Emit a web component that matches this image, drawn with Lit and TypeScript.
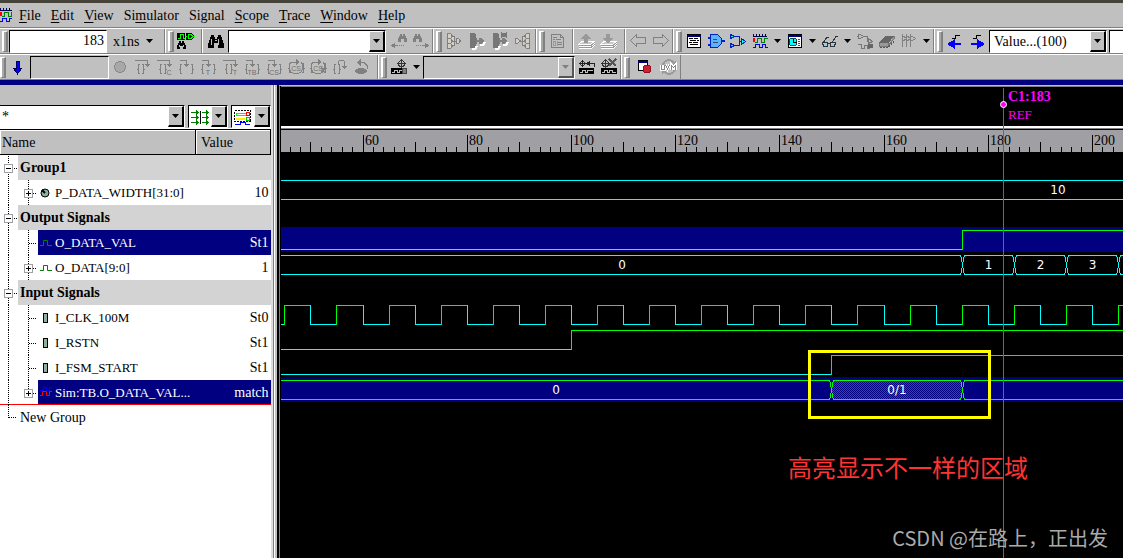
import { LitElement, html, svg, css, nothing } from "lit";
import { customElement } from "lit/decorators.js";
import { classMap } from "lit/directives/class-map.js";

/* ---------- icons (18 x 18 grid) ---------- */

const BINOC = "M4 3h3v2h1v2h2V5h1V3h3v2h1v3h1v3h1v5h-6v-5h-4v5H1v-5h1V8h1V5h1z";
const SMALL_BINOC = "M2 0h2v2h1v-2h2v2h1v2h1v4h-3v-3h-3v3h-3v-4h1v-2h1z";

const OPEN = "M3 0h-1.500v4.500h-1.500h1.500v4.500H3";
const CLOSE = "M0 0h1.500v4.500h1.500h-1.500v4.500H0";

const brace = (letters: string, wide = false) => svg`
  <path d=${OPEN} transform=${wide ? "translate(1.500 6.500)" : "translate(3.500 6.500)"} fill="none" stroke="#808080" />
  <path d=${CLOSE} transform=${wide ? "translate(13.500 6.500)" : "translate(8.500 6.500)"} fill="none" stroke="#808080" />
  ${wide
    ? svg`<path d="M3 2.500h6v4" fill="none" stroke="#808080" /><path d="M7 6h5l-2.500 3z" fill="#808080" />`
    : svg`<path d="M2 2.500h12v4" fill="none" stroke="#808080" /><path d="M12 6h5l-2.500 3z" fill="#808080" />`}
  ${letters
    ? svg`<text x=${wide ? 9 : 14} y="17" font-size="7" text-anchor="middle" font-family="Liberation Sans, sans-serif" fill="#707070">${letters}</text>`
    : nothing}`;

const ring = (extra: unknown) => svg`
  <path d="M4 4a7 7 0 1 0 10 0M4 4.500h7" fill="none" stroke="#808080" /><path d="M9 1v6l4-3z" fill="#808080" />
  <path d=${OPEN} transform="translate(.5 5.500)" fill="none" stroke="#808080" />
  <path d=${CLOSE} transform="translate(14.500 5.500)" fill="none" stroke="#808080" />
  <text x="9" y="13" font-size="7" text-anchor="middle" font-family="Liberation Sans, sans-serif" fill="#707070">CS</text>${extra}`;

const stack = (up: boolean) => svg`
  <path d="M1 12l4-3h12l-4 3zM1 14.500h12l4-3M1 16.500h12l4-3" fill="#c8c8c8" stroke="#fff" />
  <path d="M1 13.500h12l4-3M1 15.500h12l4-3" fill="none" stroke="#999" />
  <path d=${up ? "M8 2l6 5h-4v4H6V7H2z" : "M6 2h4v4h4l-6 5-6-5h4z"} fill="#999" />`;

const wave = svg`
  <path d="M2 4.500h14M2.500 2v2M5.500 2v2M8.500 2v2M11.500 2v2M14.500 2v2" stroke="#000050" fill="none" />
  <rect x="2" y="6" width="2" height="4" fill="#f00" />
  <path d="M4 10.500h2.500V6.500h4v4h3V6.500h3" stroke="#008000" fill="none" />
  <path d="M2 15.500h2.500v-3h4v3h3v-3h3v3h2" stroke="#00f" fill="none" />`;

const win = svg`<rect x="2.500" y="2.500" width="13" height="13" fill="#fff" stroke="#000" /><path d="M2 3.500h14" stroke="#000080" stroke-width="2" />`;

const ICONS: Record<string, unknown> = {
  open: svg`
    <path d="M0 1h8v7H0zM9 1h5l4 3v1l-4 3H9z" fill="#000" />
    <path d="M1 6.500h2v-4h3v4h2M8 4.500h2M11 2.500h3l2 2-2 2h-3zM16 4.500h2" stroke="#0f0" fill="none" />
    <path d=${SMALL_BINOC} transform="translate(0 9)" fill="#000" />
    <path d="M2.500 13v2M6.500 13v2" stroke="#c0c0c0" />`,
  binoc: svg`<path d=${BINOC} fill="#000" /><path d="M4.500 7v6M11.500 7v6M8 8.500h2" stroke="#c0c0c0" fill="none" />`,
  findPrev: svg`<path d=${SMALL_BINOC} transform="translate(8 2)" fill="#808080" />
    <path d="M2 13.500h6m1 0h1m1 0h1m1 0h1" stroke="#808080" /><path d="M1 13.500l4-3v6z" fill="#808080" />`,
  findNext: svg`<path d=${SMALL_BINOC} transform="translate(1 2)" fill="#808080" />
    <path d="M4 13.500h1m1 0h1m1 0h1m1 0h6" stroke="#808080" /><path d="M17 13.500l-4-3v6z" fill="#808080" />`,
  driver: svg`<path d="M2.500 1.500h3l2 2.500-2 2.500h-3zM2.500 6.500h3l2 2.500-2 2.500h-3zM2.500 11.500h3l2 2.500-2 2.500h-3zM7 4.500h2v9H7M7 9.500h4M11.500 6.500h2l2 2.500-2 2.500h-2z" fill="#d4d0c8" stroke="#808080" />`,
  load: svg`<path d="M2 1h4l2 2v3l1 1v4l-1 1v2l-2 2H2z" fill="#777" />
    <path d="M4 17h3l2-3M12 13h3l2-3" stroke="#fff" stroke-width="2" fill="none" />
    <path d="M8 8h3v-2h3l2 3-2 3h-3v-2H8z" fill="#808080" />`,
  connect: svg`<path d="M2 1h4l2 2v3l1 1v4l-1 1v2l-2 2H2z" fill="#777" />
    <path d="M10 1l6 4M16 1l-6 4" stroke="#777" stroke-width="2" />
    <path d="M4 17h3l2-3M12 13h3l2-3" stroke="#fff" stroke-width="2" fill="none" />
    <path d="M8 8h3v-2h3l2 3-2 3h-3v-2H8z" fill="#808080" />`,
  fan: svg`<path d="M15.500 1.500h-3l-2 2.500 2 2.500h3zM15.500 6.500h-3l-2 2.500 2 2.500h3zM15.500 11.500h-3l-2 2.500 2 2.500h3zM10 4.500H8v9h2M7 9.500h3M1.500 6.500h2l3 2.500-3 2.500h-2z" fill="#d4d0c8" stroke="#808080" />`,
  doc: svg`<path d="M3.500 2.500h9l3 3v10h-12zM12.500 2.500v3h3M5 5.500h4M5 7.500h2m1 0h5M10 10.500h4M10 12.500h4" fill="none" stroke="#808080" />
    <path d="M5.500 9.500h2v4h-2zM9.500 9v5" fill="none" stroke="#999" />`,
  up: stack(true),
  down: stack(false),
  back: svg`<path d="M1.500 8.500l6-6v3h9v6h-9v3z" fill="none" stroke="#808080" />`,
  fwd: svg`<path d="M16.500 8.500l-6-6v3h-9v6h9v3z" fill="none" stroke="#808080" />`,
  source: svg`${win}<path d="M4 6.500h4m1 0h4M5 8.500h6m1 0h2M4 10.500h3m1 0h5M5 12.500h8" stroke="#000" />`,
  gate: svg`<path d="M3.500 2.500h7l4 4v5l-4 4h-7z" fill="#5ab4ff" stroke="#0020c0" /><path d="M1 5.500h2M1 12.500h2M15 9h3" stroke="#0020c0" stroke-width="2" /><path d="M6 7.500h4M6 10.500h5" stroke="#404870" />`,
  tree: svg`<path d="M5 4.500h5v9H5M10 9.500h3" fill="none" stroke="#0020c0" /><path d="M1.500 2.500l4 2-4 2zM1.500 11.500l4 2-4 2zM12.500 6.500l4 3-4 3z" fill="#0ff" stroke="#0020c0" />`,
  wave,
  clockwin: svg`${win}<circle cx="7" cy="10" r="4" fill="#0ff" stroke="#005050" /><path d="M7.500 7v3h3" fill="none" stroke="#000" /><path d="M12 7.500h2M12 9.500h2M12 11.500h2M12 13.500h2" stroke="#080" />`,
  glasses: svg`<path d="M2 11l4-6h2M11 11l4-7 2 1M7 11.500h3" fill="none" stroke="#333" /><path d="M1.500 10.500h5v4h-4zM9.500 10.500h5l-1 4h-4z" fill="#90d0ff" stroke="#333" />`,
  schem: svg`<path d="M2.500 2.500h2l3 2-3 2h-2zM1 4.500h1M8 4.500h3v5h2M12.500 6.500l4 3-4 2zM2 12.500h3v4h3v-3h3v3h3" fill="none" stroke="#777" /><rect x="12" y="12" width="5" height="4" fill="#666" />`,
  chip: svg`<path d="M1 11l6-7h9l-5 7z" fill="#666" /><path d="M1 11v3h9v-3M10 14l6-7V4" fill="#999" stroke="#777" /><path d="M2 15.500h8l6-6" stroke="#555" stroke-dasharray="2 1" fill="none" />`,
  flags: svg`<path d="M2.500 2v13M6.500 2v13M10.500 2v13M2.500 3.500l4 3-4 3M6.500 3.500l4 3-4 3M10.500 3.500l5 3-5 3" fill="none" stroke="#808080" />`,
  edgePrev: svg`<path d="M6 6.500h3v-3h5" stroke="#000" fill="none" /><path d="M1 12l8-5v4h6v2H9v4z" fill="#00f" />`,
  edgeNext: svg`<path d="M5 6.500h3v-3h5" stroke="#000" fill="none" /><path d="M17 12L9 7v4H3v2h6v4z" fill="#00f" />`,
  downArrow: svg`<path d="M7 3h3v7h3l-4.500 6L4 10h3z" fill="#00f" stroke="#000060" />`,
  stop: svg`<circle cx="9" cy="9" r="5.500" fill="#a8a8a8" stroke="#888" />`,
  step: brace(""),
  stepC: brace("C"),
  stepDot: brace("", true),
  stepT: brace("T", true),
  stepTask: brace("T"),
  stepTB: brace("TB", true),
  stepCS: brace("CS", true),
  loopCS: ring(nothing),
  loopX: ring(svg`<path d="M12 9l4 6M16 9l-4 6" stroke="#808080" />`),
  stepOut: svg`<path d=${OPEN} transform="translate(1.500 6.500)" fill="none" stroke="#808080" /><path d=${CLOSE} transform="translate(6.500 6.500)" fill="none" stroke="#808080" />
    <path d="M7.500 6v-2l1-1.500h4l1 1.500v4" fill="none" stroke="#808080" /><path d="M11 8h5l-2.500 3z" fill="#808080" />`,
  undo: svg`<path d="M6 4.500h5l3 3v3" fill="none" stroke="#808080" /><path d="M8 1v7L4 4.500z" fill="#808080" /><ellipse cx="8" cy="13" rx="6" ry="3" fill="#808080" />`,
  probe: svg`<circle cx="11.500" cy="5.500" r="3" fill="none" stroke="#333" /><path d="M11.500 1v9M7 5.500h9" stroke="#333" /><rect x="1" y="10" width="11" height="6" fill="#000" /><path d="M2 14.500h2.500v-2h3v2h2v-2h2" stroke="#c0c0c0" fill="none" /><rect x="12.500" y="10.500" width="4" height="5" fill="#808080" stroke="#444" />`,
  mark: svg`<circle cx="4.500" cy="5.500" r="2" fill="none" stroke="#333" /><path d="M4.500 2v7M1 5.500h7M8 5.500h8.500v3" stroke="#222" fill="none" /><path d="M8 5.500l4-3v6z" fill="#222" /><rect x="1" y="10" width="15" height="6" fill="#000" /><path d="M2 14.500h2.500v-2h3v2h2v-2h5" stroke="#c0c0c0" fill="none" />`,
  unmark: svg`<circle cx="5.500" cy="5.500" r="3" fill="none" stroke="#333" /><path d="M5.500 1v9M1 5.500h9" stroke="#333" /><path d="M9 1l7 7M16 1L9 8" stroke="#555" stroke-width="2" /><rect x="1" y="10" width="16" height="6" fill="#000" /><path d="M2 14.500h2.500v-2h3v2h2v-2h3v2h3" stroke="#c0c0c0" fill="none" />`,
  record: svg`<rect x="3.500" y="2.500" width="9" height="10" fill="#fff" stroke="#000" /><path d="M3 3.500h10" stroke="#000080" stroke-width="2" /><circle cx="12" cy="11" r="4" fill="#d02030" stroke="#901020" />`,
  uvm: svg`<path d="M3 7a6 6 0 0 1 11-2M15 11a6 6 0 0 1-11 2" stroke="#999" stroke-width="2" fill="none" /><path d="M16 2v5h-5zM2 16v-5h5z" fill="#999" />
    <path d="M1.500 7v4h3V7M5.500 7l2 4 2-4M11.500 11.500V7.500l2 2 2-2v4" stroke="#fff" stroke-width="3" fill="none" /><path d="M1.500 7v4h3V7M5.500 7l2 4 2-4M11.500 11.500V7.500l2 2 2-2v4" stroke="#888" fill="none" />`,
};

const icon = (name: string) =>
  html`<svg width="18" height="18" viewBox="0 0 18 18" shape-rendering="crispEdges" aria-hidden="true">${ICONS[name]}</svg>`;
const triangle = html`<svg width="7" height="4" viewBox="0 0 7 4" aria-hidden="true"><path d="M0 0h7L3.500 4z" fill="currentColor" /></svg>`;

/* ---------- time axis ---------- */

const END = 600;
const at = (t: number) => Math.floor(82 + (t - 60) * 5.21);

type Segment = { from: number; to: number; label: string; labelX?: number; diff?: boolean };
type Signal = {
  name: string;
  value?: string;
  kind: "group" | "signal";
  icon?: "param" | "net" | "port" | "compare";
  expand?: boolean;
  selected?: boolean;
  edges?: number[];
  start?: 0 | 1;
  bus?: Segment[];
  tone?: string;
};

const counter: Segment[] = [{ from: -60, to: 175, label: "0", labelX: 341 }];
for (let i = 1; 165 + i * 10 < END; i++) counter.push({ from: 165 + i * 10, to: 175 + i * 10, label: String(i) });
const clock: number[] = [];
for (let t = 45; t < END; t += 5) clock.push(t);

const SIGNALS: Signal[] = [
  { name: "Group1", kind: "group" },
  { name: "P_DATA_WIDTH[31:0]", value: "10", kind: "signal", icon: "param", expand: true, bus: [{ from: -60, to: END, label: "10", labelX: 777 }] },
  { name: "Output Signals", kind: "group" },
  { name: "O_DATA_VAL", value: "St1", kind: "signal", icon: "net", selected: true, start: 0, edges: [175] },
  { name: "O_DATA[9:0]", value: "1", kind: "signal", icon: "net", expand: true, bus: counter },
  { name: "Input Signals", kind: "group" },
  { name: "I_CLK_100M", value: "St0", kind: "signal", icon: "port", start: 0, edges: clock },
  { name: "I_RSTN", value: "St1", kind: "signal", icon: "port", start: 0, edges: [100] },
  { name: "I_FSM_START", value: "St1", kind: "signal", icon: "port", start: 0, edges: [150] },
  {
    name: "Sim:TB.O_DATA_VAL...", value: "match", kind: "signal", icon: "compare", expand: true, selected: true, tone: "#0f0",
    bus: [
      { from: -60, to: 150, label: "0", labelX: 275 },
      { from: 150, to: 175, label: "0/1", diff: true },
      { from: 175, to: END, label: "" },
    ],
  },
];

const BASE = css`
  :host, * { box-sizing: border-box; }
  button, input, select { font: inherit; color: inherit; margin: 0; padding: 0; border: 0; border-radius: 0; background: none; outline: none; }
  svg { display: block; flex: none; }
`;

/* ---------- drop-down ---------- */

@customElement("combo-box")
class ComboBox extends LitElement {
  static properties = { label: {}, value: {}, off: { type: Boolean } };
  declare label: string;
  declare value: string;
  declare off: boolean;
  static styles = [BASE, css`
    :host { display: grid; height: 23px; border: 1px solid #fff; border-top-color: #000; border-left-color: #000; background: #fff; align-items: stretch; min-width: 0; overflow: hidden; }
    :host([off]) { background: #c0c0c0; color: #808080; }
    select { grid-area: 1 / 1; appearance: none; width: 100%; padding-left: 4px; color: #000; opacity: 1; }
    .arrow { grid-area: 1 / 1; justify-self: end; width: 16px; display: grid; place-items: center; background: #c0c0c0; border: 1px solid #fff; border-right: 2px solid #000; border-bottom: 2px solid #000; pointer-events: none; }
    :host([off]) .arrow { border-color: #fff #555 #555 #fff; }
    .icon { grid-area: 1 / 1; align-self: center; pointer-events: none; padding-left: 1px; }
  `];
  render() {
    return html`<select aria-label=${this.label} ?disabled=${this.off}><option>${this.value}</option></select>
      <span class="icon"><slot></slot></span>
      <span class="arrow">${triangle}</span>`;
  }
}

/* ---------- toolbars ---------- */

@customElement("tool-bars")
class ToolBars extends LitElement {
  static styles = [BASE, css`
    :host { display: block; background: #c0c0c0; border-top: 3px solid #45433a; border-bottom: 5px solid #000080; }
    nav { display: flex; height: 25px; align-items: center; gap: 10px; border-bottom: 1px solid #808080; overflow: hidden; }
    nav a { color: #000; text-decoration: none; white-space: nowrap; }
    nav svg { margin-right: -3px; }
    u { text-underline-offset: 2px; }
    .bar { display: flex; height: 26px; border-top: 1px solid #fff; border-bottom: 1px solid #808080; overflow: hidden; }
    .group { display: flex; align-items: center; border-left: 1px solid #fff; border-right: 1px solid #808080; flex: none; }
    .group.first { border-left: 0; }
    .group.last { flex: 1; border-right: 0; }
    .gap { gap: 1px; }
    .wide { gap: 3px; }
    .l2 { padding-left: 2px; }
    .l1 { padding-left: 1px; }
    .r1 { padding-right: 1px; }
    .r4 { padding-right: 4px; }
    .grip { width: 6px; height: 21px; margin: 0 1px 0 2px; border: 1px solid; border-color: #fff #808080 #808080 #fff; border-width: 1px 2px 1px 2px; background: #a8a8a8; flex: none; }
    .edge { margin-left: 0; }
    .gap .grip, .wide .grip { margin-right: 0; }
    button { width: 22px; height: 24px; display: grid; place-items: center; flex: none; }
    button.arrow { width: 13px; }
    button.unit { width: 57px; display: flex; align-items: center; gap: 7px; padding-left: 6px; }
    input { height: 23px; border: 1px solid #fff; border-top-color: #000; border-left-color: #000; background: #fff; text-align: right; padding-right: 2px; min-width: 0; }
    input:disabled { background: #c0c0c0; }
    .time { width: 98px; }
    .goto { width: 79px; margin-left: 1px; }
    .find { width: 158px; margin: 0 2px 0 1px; }
    .scope { width: 152px; margin-right: 1px; }
    .mode { width: 118px; margin: 0 2px 0 1px; }
    .rest { flex: 1; }
  `];
  private btn(name: string) {
    return html`<button type="button" aria-label=${name}>${icon(name)}</button>`;
  }
  private btns(names: string) {
    return names.split(" ").map((n) => (n === "v" ? html`<button type="button" class="arrow" aria-label="More">${triangle}</button>` : this.btn(n)));
  }
  render() {
    const grip = html`<span class="grip"></span>`;
    const menu = [["", "F", "ile"], ["", "E", "dit"], ["", "V", "iew"], ["Si", "m", "ulator"], ["Si", "g", "nal"], ["", "S", "cope"], ["", "T", "race"], ["", "W", "indow"], ["", "H", "elp"]];
    return html`
      <nav>
        <svg width="12" height="18" viewBox="2 0 12 18" shape-rendering="crispEdges" aria-hidden="true">${wave}</svg>
        ${menu.map(([a, k, b]) => html`<a href="#">${a}<u>${k}</u>${b}</a>`)}
      </nav>
      <div class="bar">
        <div class="group first">${grip}<input class="time" aria-label="Time" value="183" /><button type="button" class="unit">x1ns ${triangle}</button></div>
        <div class="group r4">${grip}${this.btn("open")}</div>
        <div class="group l2">${this.btn("binoc")}<combo-box class="find" label="Find" value=""></combo-box>${this.btns("findPrev findNext")}</div>
        <div class="group gap r1">${grip}${this.btns("driver load connect fan")}</div>
        <div class="group r4">${grip}${this.btn("doc")}</div>
        <div class="group l2 r4">${this.btns("up down")}</div>
        <div class="group gap l1">${this.btns("back fwd")}</div>
        <div class="group">${grip}${this.btns("source gate tree wave v clockwin v glasses v schem chip flags v")}</div>
        <div class="group last">${grip}${this.btns("edgePrev edgeNext")}<combo-box class="mode" label="Search mode" value="Value...(100)"></combo-box><input class="rest" aria-label="Search value" /></div>
      </div>
      <div class="bar">
        <div class="group first r4"><span class="grip edge"></span>${this.btn("downArrow")}<input class="goto" aria-label="Go to" disabled />${this.btns("stop step stepC stepDot stepT stepTask stepTB stepCS loopCS loopX stepOut undo")}</div>
        <div class="group">${grip}${this.btns("probe v")}<combo-box class="scope" label="Marker" value="" off></combo-box>${this.btns("mark unmark")}</div>
        <div class="group wide">${grip}${this.btns("record uvm")}</div>
      </div>`;
  }
}

/* ---------- signal list ---------- */

@customElement("signal-list")
class SignalList extends LitElement {
  static styles = [BASE, css`
    :host { display: flex; flex-direction: column; width: 273px; flex: none; background: #fff; border-right: 2px solid #dcdcdc; }
    .filters { display: flex; gap: 3px; padding-top: 20px; background: #c0c0c0; border-bottom: 1px solid #fff; }
    .filters combo-box { width: 40px; flex: none; }
    .filters .pattern { flex: 1; width: auto; margin-left: -3px; }
    table { border-collapse: collapse; width: 100%; table-layout: fixed; }
    th { height: 25px; background: #c0c0c0; border: 1px solid #000; border-left: 0; font-weight: normal; text-align: left; padding: 0 0 0 2px; box-shadow: inset 1px 1px #fff; }
    th.value { width: 75px; padding-left: 5px; }
    td { height: 25px; padding: 0; }
    .row { display: flex; align-items: center; height: 25px; white-space: nowrap; }
    .text { flex: 1; display: flex; align-items: center; justify-content: space-between; height: 25px; padding: 0 2px; }
    .group .text { background: #d3d3d3; font-weight: bold; }
    .name { display: flex; align-items: center; gap: 3px; font-size: 13px; }
    .selected .text { background: #000080; color: #fff; }
    .sim { background: linear-gradient(#f00, #f00) 0 100% / 100% 1px no-repeat; }
    .sim .text { border-bottom: 1px solid #f00; }
  `];
  private box(x: number) {
    return svg`<rect x=${x - 4 + 0.5} y="9.500" width="8" height="8" fill="#fff" stroke="#a0a0a4" />`;
  }
  private lead(s: Signal, first: boolean, last: boolean) {
    if (s.kind === "group")
      return html`<svg width="18" height="25" aria-hidden="true" shape-rendering="crispEdges">
        <path d="M8.500 ${first ? 1 : 0}V25M12 13.500h5" stroke="#000" stroke-dasharray="1 1" />${this.box(8)}<path d="M6 13.500h5" stroke="#000" /></svg>`;
    return html`<svg width="38" height="25" aria-hidden="true" shape-rendering="crispEdges">
      <path d="M8.500 0v25M28.500 0v${last ? 13 : 25}M29 13.500h8" stroke="#000" stroke-dasharray="1 1" />
      ${s.expand ? svg`${this.box(28)}<path d="M26 13.500h5M28.500 11v5" stroke="#000" />` : nothing}</svg>`;
  }
  private glyph(kind?: string) {
    const g: Record<string, unknown> = {
      param: svg`<circle cx="5" cy="7" r="4" fill="#8fb09f" stroke="#000" /><path d="M2 4l3 3" stroke="#000" stroke-width="2" />`,
      net: svg`<path d="M0 9.500h3.500v-5h4v5h4.500" fill="none" stroke="#008000" />`,
      port: svg`<rect x="3.500" y="2.500" width="4" height="9" fill="#8fb09f" stroke="#000" />`,
      compare: svg`<path d="M0 5.500h3.500v-3h3v3h3v-3h3" fill="none" stroke="#00f" /><path d="M0 10.500h2.500V6.500h4v4h3V6.500h2.500" fill="none" stroke="#f00" />`,
    };
    return html`<svg width="12" height="14" aria-hidden="true">${g[kind ?? "net"]}</svg>`;
  }
  render() {
    const end = SIGNALS.length - 1;
    return html`
      <div class="filters">
        <combo-box class="pattern" label="Filter" value="*"></combo-box>
        <combo-box label="Direction"><svg width="20" height="18" viewBox="0 0 20 18" shape-rendering="crispEdges">
          <path d="M1 4.500h7M1 9.500h7M1 14.500h7M12 4.500h6M12 9.500h6M12 14.500h6M6 2.500l2 2-2 2M6 12.500l2 2-2 2M6 7.500l2 2-2 2M16 2.500l2 2-2 2M16 7.500l2 2-2 2M16 12.500l2 2-2 2" stroke="#008000" fill="none" /><path d="M10.500 3v13" stroke="#000" /></svg></combo-box>
        <combo-box label="View"><svg width="20" height="18" viewBox="0 0 20 18" shape-rendering="crispEdges">
          <rect x="1.500" y="2.500" width="16" height="11" fill="#fff" stroke="#000" stroke-dasharray="2 1" />
          <path d="M3 5.500h10v2H3z" fill="#fff" stroke="#0f0" /><path d="M13.500 4.500h3v3h-3z" fill="none" stroke="#f00" /><path d="M3 11h9" stroke="#fe0" stroke-width="2" /><path d="M13.500 9.500h3v3h-3z" fill="#fff" stroke="#0c0" /><path d="M2 16.500h5v-2h5v2h5" stroke="#00f" fill="none" /></svg></combo-box>
      </div>
      <table>
        <thead><tr><th>Name</th><th class="value">Value</th></tr></thead>
        <tbody>
          ${SIGNALS.map((s, i) => html`<tr><td colspan="2"><div class=${classMap({ row: true, group: s.kind === "group", selected: !!s.selected, sim: i === end })}>
            ${this.lead(s, i === 0, i === end)}
            <div class="text">
              ${s.kind === "group" ? s.name : html`<span class="name">${this.glyph(s.icon)}${s.name}</span>`}
              <span>${s.value ?? ""}</span>
            </div></div></td></tr>`)}
          <tr><td colspan="2"><div class="row">
            <svg width="18" height="25" aria-hidden="true" shape-rendering="crispEdges"><path d="M8.500 0v13M9 12.500h8" stroke="#000" stroke-dasharray="1 1" /></svg>
            <div class="text">New Group</div></div></td></tr>
        </tbody>
      </table>`;
  }
}

/* ---------- waveforms ---------- */

@customElement("wave-view")
class WaveView extends LitElement {
  static properties = { span: { state: true } };
  declare span: number;
  private watcher?: ResizeObserver;

  constructor() {
    super();
    this.span = 0;
  }
  connectedCallback() {
    super.connectedCallback();
    this.watcher = new ResizeObserver(() => (this.span = this.clientWidth - 1));
    this.watcher.observe(this);
  }
  disconnectedCallback() {
    this.watcher?.disconnect();
    super.disconnectedCallback();
  }

  static styles = [BASE, css`
    :host { display: flex; flex-direction: column; flex: 1; min-width: 0; position: relative; overflow: hidden; background: #000; border-left: 1px solid #808080; padding-left: 1px; }
    .cursors { height: 40px; border-top: 1px solid #808080; flex: none; }
    .ruler { height: 26px; flex: none; background: #a0a0a4; border-top: 2px solid #fff; box-shadow: inset 0 1px #808080, inset 0 2px #000; padding-top: 2px; }
    .lane { height: 25px; }
    .selected { background: #000080; }
    svg { width: 100%; shape-rendering: crispEdges; }
    .lane text { font: 12px "DejaVu Sans", sans-serif; fill: #fff; text-anchor: middle; }
    .cursor { position: absolute; top: 2px; bottom: 0; width: 1px; background: #f0f; }
    .flag { position: absolute; top: 1px; color: #f0f; display: flex; align-items: center; gap: 1px; line-height: 19px; }
    .flag svg { width: 7px; shape-rendering: auto; margin-bottom: 3px; }
    .flag small { font-size: 13px; display: block; line-height: 18px; }
    .diffbox { position: absolute; top: 264px; width: 183px; height: 69px; border: 3px solid #ff0; }
    .note { position: absolute; top: 363px; color: #ff3333; font: 24px/36px "Noto Sans CJK SC", sans-serif; white-space: nowrap; }
    .mark { position: absolute; right: 15px; bottom: 5px; color: #aaa; font: 20px/30px "Noto Sans CJK SC", sans-serif; white-space: nowrap; }
  `];
  private ruler() {
    const ticks: unknown[] = [];
    for (let t = 46; at(t) < this.span; t += 2) {
      const h = t % 20 === 0 ? 17 : t % 10 === 0 ? 10 : 5;
      ticks.push(svg`<path d="M${at(t) + 0.5} 22v-${h}" stroke="#000" />`);
      if (h === 17 && at(t) + 24 < this.span) ticks.push(svg`<text x=${at(t) + 2} y="15">${t}</text>`);
    }
    return html`<svg height="22">${ticks}</svg>`;
  }
  private digital(s: Signal) {
    const out: unknown[] = [];
    let level = s.start ?? 0;
    let x = 0;
    for (const t of [...(s.edges ?? []), END + 100]) {
      const nx = at(t);
      out.push(svg`<path d="M${x} ${level ? 3.5 : 22.5}H${nx + (level ? 0 : 1)}" stroke=${level ? "#0f0" : "#0ff"} />`);
      level = level ? 0 : 1;
      out.push(svg`<path d="M${nx + 0.5} 3V23" stroke=${level ? "#0f0" : "#0ff"} />`);
      x = nx;
    }
    return out;
  }
  private bus(s: Signal) {
    return (s.bus ?? []).filter((b) => at(b.from) < this.span).map((b) => {
      const l = at(b.from) + 0.5;
      const r = at(b.to) + 0.5;
      const mid = b.labelX ?? (l + r) / 2;
      return svg`<path d="M${l} 13L${l + 1} 7L${l + 2} 3.500H${r - 2}L${r - 1} 7L${r} 13L${r - 1} 19L${r - 2} 22.500H${l + 2}L${l + 1} 19Z" fill=${b.diff ? "url(#hatch)" : "none"} stroke=${s.tone ?? "#0ff"} />
        ${b.label && mid + 12 < this.span ? svg`<text x=${mid} y="17">${b.label}</text>` : nothing}`;
    });
  }
  render() {
    const c = at(183) + 1;
    return html`
      <div class="cursors"></div>
      <div class="ruler">${this.ruler()}</div>
      ${SIGNALS.map((s) => html`<div class=${classMap({ lane: true, selected: !!s.selected })}>
        ${s.kind === "group" ? nothing : html`<svg height="25">
          ${s.tone ? svg`<defs><pattern id="hatch" width="2" height="2" patternUnits="userSpaceOnUse"><rect width="2" height="2" fill="#f00" /><path d="M0 0h1v1H0zM1 1h1v1H1z" fill="#000080" /></pattern></defs>` : nothing}
          ${s.bus ? this.bus(s) : this.digital(s)}</svg>`}
      </div>`)}
      <div class="cursor" style="left:${c}px"></div>
      <div class="flag" style="left:${c - 3}px">
        <svg height="7" viewBox="0 0 7 7"><circle cx="3.500" cy="3.500" r="3" fill="#f0f" stroke="#fff" /></svg>
        <div><b>C1:183</b><small>REF</small></div>
      </div>
      <div class="diffbox" style="left:${at(150) - 22}px"></div>
      <div class="note" style="left:${at(150) - 42}px">高亮显示不一样的区域</div>
      <div class="mark">CSDN @在路上，正出发</div>`;
  }
}

@customElement("app-root")
class AppRoot extends LitElement {
  static styles = css`
    :host { display: flex; flex-direction: column; height: 100vh; overflow: hidden; background: #c0c0c0; color: #000; font: 14px/17px "Liberation Serif", serif; }
    main { display: flex; flex: 1; min-height: 0; }
    .split { box-sizing: border-box; width: 6px; flex: none; background: #c0c0c0; border-left: 1px solid #808080; border-right: 2px solid #000; box-shadow: inset 1px 0 #fff; }
    wave-view { margin-top: 1px; }
  `;
  render() {
    return html`<tool-bars></tool-bars><main><signal-list></signal-list><div class="split"></div><wave-view></wave-view></main>`;
  }
}
